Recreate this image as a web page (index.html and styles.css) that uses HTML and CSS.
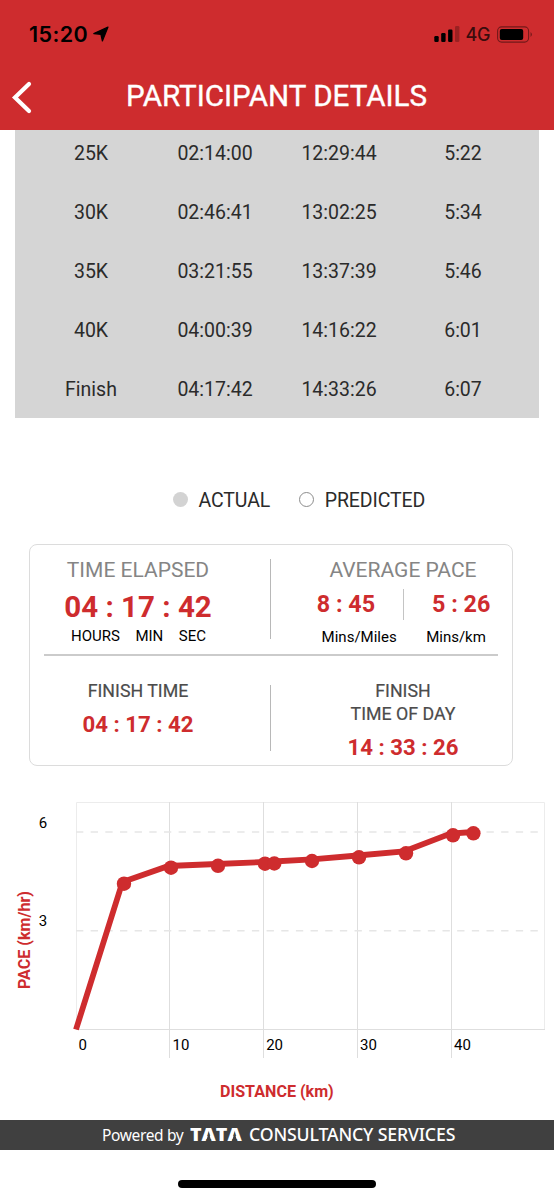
FILE: index.html
```html
<!DOCTYPE html>
<html lang="en">
<head>
  <meta charset="UTF-8" />
  <meta name="viewport" content="width=device-width, initial-scale=1.0" />
  <title>Participant Details</title>
  <link rel="stylesheet" href="styles.css">
</head>
<body>
  <header class="header">
    <div class="status-bar">
      <span class="clock">15:20</span>
      <svg class="location" width="16" height="16" viewBox="0 0 16 16"><path d="M0.8 7.6 L15 1 L9.4 15 L7.9 8.3 Z" stroke="#000" stroke-width="1.2" stroke-linejoin="round"/></svg>
      <svg class="signal" width="26" height="16" viewBox="0 0 26 16">
        <rect x="0.3" y="10" width="4.4" height="6" rx="1.2"/>
        <rect x="7.2" y="7" width="4.4" height="9" rx="1.2"/>
        <rect x="14.1" y="3.5" width="4.4" height="12.5" rx="1.2"/>
        <rect x="21" y="0" width="4.4" height="16" rx="1.2" opacity="0.25"/>
      </svg>
      <span class="network">4G</span>
      <svg class="battery" width="36" height="17" viewBox="0 0 36 17">
        <rect x="0.6" y="0.9" width="31" height="15.2" rx="4" fill="none" stroke="#000" stroke-opacity="0.45" stroke-width="1.1"/>
        <rect x="2.8" y="3" width="23.4" height="11" rx="2"/>
        <path d="M33.6 6 Q36 8.5 33.6 11 Z" opacity="0.5"/>
      </svg>
    </div>
    <div class="nav-bar">
      <svg class="back" width="22" height="34" viewBox="0 0 22 34"><path d="M18 4 L4 17.5 L18 31" fill="none" stroke="#fff" stroke-width="4.2" stroke-linecap="round" stroke-linejoin="miter"/></svg>
      <h1>PARTICIPANT DETAILS</h1>
    </div>
  </header>

  <!-- Split times -->
  <section class="splits">
    <div class="split"><span>25K</span><span>02:14:00</span><span>12:29:44</span><span>5:22</span></div>
    <div class="split"><span>30K</span><span>02:46:41</span><span>13:02:25</span><span>5:34</span></div>
    <div class="split"><span>35K</span><span>03:21:55</span><span>13:37:39</span><span>5:46</span></div>
    <div class="split"><span>40K</span><span>04:00:39</span><span>14:16:22</span><span>6:01</span></div>
    <div class="split"><span>Finish</span><span>04:17:42</span><span>14:33:26</span><span>6:07</span></div>
  </section>

  <div class="legend">
    <span class="dot actual"></span><span class="legend-label">ACTUAL</span>
    <span class="dot predicted"></span><span class="legend-label">PREDICTED</span>
  </div>

  <!-- Summary card -->
  <section class="card">
    <div class="card-row row-top">
      <div class="cell">
        <h2>TIME ELAPSED</h2>
        <div class="elapsed">04 : 17 : 42</div>
        <div class="units"><span>HOURS</span><span>MIN</span><span>SEC</span></div>
      </div>
      <div class="divider"></div>
      <div class="cell">
        <h2>AVERAGE PACE</h2>
        <div class="paces"><span>8 : 45</span><i class="pace-divider"></i><span>5 : 26</span></div>
        <div class="pace-units"><span>Mins/Miles</span><span>Mins/km</span></div>
      </div>
    </div>
    <div class="card-row row-bottom">
      <div class="cell">
        <h3>FINISH TIME</h3>
        <div class="finish">04 : 17 : 42</div>
      </div>
      <div class="divider"></div>
      <div class="cell">
        <h3>FINISH<br>TIME OF DAY</h3>
        <div class="finish">14 : 33 : 26</div>
      </div>
    </div>
  </section>

  <!-- Pace chart -->
  <svg class="chart" width="554" height="320" viewBox="0 790 554 320">
    <g class="frame">
      <path d="M76.5 1029 V802.5 H544.5 V1029"/>
    </g>
    <g class="grid">
      <path d="M169.5 802 V1058 M263.5 802 V1058 M357.5 802 V1058 M451.5 802 V1058"/>
      <path d="M76 1029.5 H545"/>
    </g>
    <path class="dashes" d="M76 832 H545 M76 930.7 H545"/>
    <polyline class="line" points="76,1029.5 122.5,882 168.5,866 217,864 264,862 312,859.3 357.5,855.5 404,851.5 450.5,833.5 473,832"/>
    <g class="points">
      <circle cx="124" cy="883.7" r="7.2"/>
      <circle cx="171" cy="867.7" r="7.2"/>
      <circle cx="218" cy="865.8" r="7.2"/>
      <circle cx="265" cy="863.7" r="7.2"/>
      <circle cx="274.3" cy="863.5" r="7.2"/>
      <circle cx="312" cy="861" r="7.2"/>
      <circle cx="359" cy="857.3" r="7.2"/>
      <circle cx="406" cy="853.3" r="7.2"/>
      <circle cx="453" cy="835.3" r="7.2"/>
      <circle cx="473.4" cy="833.3" r="7.2"/>
    </g>
    <g class="ticks">
      <text x="38.7" y="827.5">6</text>
      <text x="38.7" y="926.2">3</text>
      <text x="78.5" y="1050">0</text>
      <text x="172.5" y="1050">10</text>
      <text x="266.2" y="1050">20</text>
      <text x="360" y="1050">30</text>
      <text x="454" y="1050">40</text>
    </g>
    <text class="axis" transform="translate(29.5 989) rotate(-90)">PACE (km/hr)</text>
    <text class="axis" x="220" y="1096.5">DISTANCE (km)</text>
  </svg>

  <footer class="footer">
    <span class="powered">Powered by</span>
    <span class="tata">T<b>A</b>T<b>A</b></span>
    <span class="tcs">CONSULTANCY SERVICES</span>
  </footer>
  <div class="home-indicator"></div>
</body>
</html>
```
FILE: styles.css
```css
/* Reset & Body */
* { box-sizing: border-box; margin: 0; padding: 0; }
body {
  width: 554px; height: 1200px;
  font-family: Roboto, sans-serif;
  background: #fff;
  overflow: hidden;
}
h1, h2, h3 { font-weight: 400; }

/* Header */
.header { height: 130px; background: #ce2c2e; }
.status-bar {
  display: flex; align-items: center;
  height: 68px;
  padding: 0 21px 0 29px;
  font-family: Inter, sans-serif;
}
.clock { font-size: 21.5px; font-weight: 600; letter-spacing: 0.4px; width: 64px; }
.signal { margin-left: auto; }
.network { font-size: 18px; font-weight: 500; letter-spacing: -0.4px; margin: 1px 7px 0 6px; color: #3a0c0d; }
.nav-bar {
  display: flex; align-items: center;
  height: 58px;
  padding-left: 11px;
}
.nav-bar h1 {
  margin: -2px 0 0 93px;
  font-size: 29.6px;
  -webkit-text-stroke: 0.35px #fff;
  color: #fff;
  white-space: nowrap;
}

/* Split times, scrolled under the header */
.splits {
  display: flex; flex-direction: column;
  justify-content: flex-end;
  height: 288px;
  margin: 0 15px;
  padding: 0 14px;
  background: #d5d5d5;
  overflow: hidden;
}
.split {
  display: grid;
  grid-template-columns: repeat(4, 1fr);
  flex: none;
  height: 59px;
  line-height: 61px;
  text-align: center;
  font-size: 19.5px;
  color: #2b2b2b;
}

/* Legend */
.legend {
  display: flex; align-items: center;
  margin-top: 70px;
  padding-left: 173px;
  height: 24px;
  font-size: 19.5px;
  color: #2b2b2b;
}
.dot { width: 15px; height: 15px; border-radius: 50%; margin-top: -1px; }
.actual { background: #d3d3d3; }
.predicted { border: 1px solid #8c8c8c; margin-left: 29px; }
.legend-label { margin-left: 10.5px; letter-spacing: -0.1px; }

/* Summary card */
.card {
  width: 484px; height: 222px;
  margin: 32px 0 0 29px;
  border: 1px solid #dcdcdc;
  border-radius: 8px;
}
.card-row { display: flex; margin: 0 14px; }
.row-top { height: 111px; padding-top: 13px; border-bottom: 2px solid #cbcbcb; }
.row-bottom { padding-top: 23px; }
.cell {
  display: flex; flex-direction: column; align-items: center;
  width: 190px;
  white-space: nowrap;
}
.cell:first-child { margin-left: -1px; }
.divider { width: 1px; background: #b8b8b8; margin: 0 auto 0 37px; }
.row-top .divider { height: 80px; margin-top: 1px; }
.row-bottom .divider { height: 66px; margin-top: 6px; }
.card h2 { font-size: 21px; line-height: 24px; color: #858585; }
.elapsed { margin-top: 6px; font-size: 29.5px; font-weight: 700; line-height: 38px; color: #ce2c2e; }
.units { display: flex; gap: 15.5px; padding-left: 1px; font-size: 15px; line-height: 20px; }
.paces {
  display: flex; align-items: center; gap: 28px;
  margin-top: 6px;
  padding-left: 1px;
  font-size: 23.3px; font-weight: 700; line-height: 32px;
  color: #ce2c2e;
}
.pace-divider { width: 1px; height: 31px; background: #c4c4c4; }
.pace-units { display: flex; gap: 29.5px; margin-top: 7px; padding-left: 1.5px; font-size: 15px; line-height: 20px; }
.card h3 {
  font-size: 17.8px; line-height: 23px;
  text-align: center;
  color: #4c4c4c;
  -webkit-text-stroke: 0.2px #4c4c4c;
}
.finish { margin-top: 8px; font-size: 22.2px; font-weight: 700; line-height: 28px; color: #ce2c2e; }

/* Pace chart */
.chart { display: block; margin-top: 24px; }
.frame path { fill: none; stroke: #ececec; }
.grid path { fill: none; stroke: #dedede; }
.dashes { stroke: #e6e6e6; stroke-width: 1.5; stroke-dasharray: 7.33 7.33; }
.line { fill: none; stroke: #ce2c2e; stroke-width: 5.8; }
.points circle { fill: #ce2c2e; }
.ticks text { font-size: 15px; }
.axis { font-size: 16.1px; font-weight: 700; fill: #ce2c2e; }

/* Footer */
.footer {
  display: flex; align-items: center;
  height: 30px;
  margin-top: 10px;
  padding-left: 102px;
  background: #404040;
  color: #fff;
  font-family: "Noto Sans", sans-serif;
  line-height: 26px;
  white-space: nowrap;
}
.powered { width: 88px; font-size: 15.5px; letter-spacing: -0.35px; }
.tata {
  width: 59px;
  margin-top: -2px;
  font-size: 18px; font-weight: 900;
  transform: scaleX(1.09);
  transform-origin: left;
}
.tata b { position: relative; display: inline-block; font-weight: 900; }
/* open up the A, the wordmark has no crossbar */
.tata b::after {
  content: "";
  position: absolute;
  left: 31%; bottom: 5px;
  width: 38%; height: 10px;
  background: #404040;
  clip-path: polygon(50% 0, 100% 100%, 0 100%);
}
.tcs { margin-top: -3px; font-size: 17.7px; font-weight: 500; letter-spacing: -0.15px; }
.home-indicator {
  width: 198px; height: 8px;
  margin: 30px auto 0;
  border-radius: 4px;
  background: #000;
}
```
